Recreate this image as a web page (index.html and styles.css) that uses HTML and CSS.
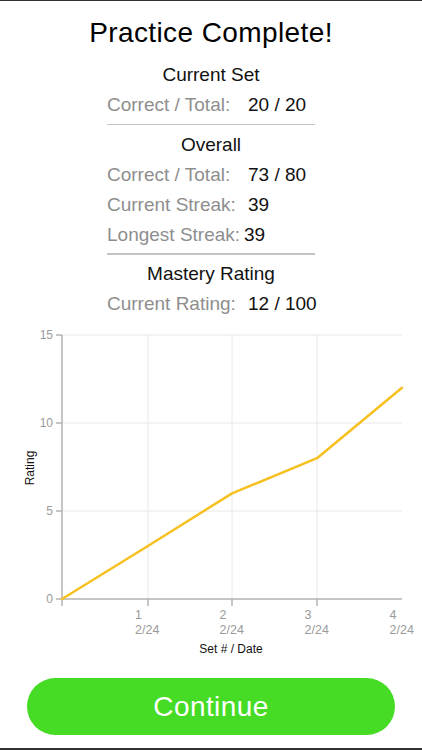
FILE: index.html
```html
<!DOCTYPE html>
<html>
<head>
<meta charset="utf-8">
<link rel="stylesheet" href="styles.css">
</head>
<body>
<div class="page">
  <h1 class="title">Practice Complete!</h1>
  <div class="stats">
    <div class="heading">Current Set</div>
    <div class="row"><span class="label">Correct / Total:</span><span class="value">20 / 20</span></div>
    <div class="divider"></div>
    <div class="heading">Overall</div>
    <div class="row"><span class="label">Correct / Total:</span><span class="value">73 / 80</span></div>
    <div class="row"><span class="label">Current Streak:</span><span class="value">39</span></div>
    <div class="row row-tight"><span class="label">Longest Streak:</span><span class="value">39</span></div>
    <div class="divider"></div>
    <div class="heading">Mastery Rating</div>
    <div class="row"><span class="label">Current Rating:</span><span class="value">12 / 100</span></div>
  </div>
  <svg class="chart" width="422" height="344" viewBox="0 319 422 344">
    <g class="grid">
      <line x1="62" y1="335" x2="402" y2="335"/>
      <line x1="62" y1="423" x2="402" y2="423"/>
      <line x1="62" y1="511" x2="402" y2="511"/>
      <line x1="148" y1="335" x2="148" y2="599"/>
      <line x1="232" y1="335" x2="232" y2="599"/>
      <line x1="317" y1="335" x2="317" y2="599"/>
    </g>
    <g class="axis">
      <line x1="62" y1="335" x2="62" y2="599.75"/>
      <line x1="61.25" y1="599" x2="402" y2="599"/>
      <line x1="56" y1="335" x2="62" y2="335"/>
      <line x1="56" y1="423" x2="62" y2="423"/>
      <line x1="56" y1="511" x2="62" y2="511"/>
      <line x1="56" y1="599" x2="62" y2="599"/>
      <line x1="62" y1="599" x2="62" y2="606"/>
      <line x1="148" y1="599" x2="148" y2="606"/>
      <line x1="232" y1="599" x2="232" y2="606"/>
      <line x1="317" y1="599" x2="317" y2="606"/>
    </g>
    <g class="ticks-y">
      <text x="53" y="339">15</text>
      <text x="53" y="427">10</text>
      <text x="53" y="515">5</text>
      <text x="53" y="603">0</text>
    </g>
    <g class="ticks-x">
      <text x="135" y="619">1</text><text x="135" y="634">2/24</text>
      <text x="219.5" y="619">2</text><text x="219.5" y="634">2/24</text>
      <text x="304.5" y="619">3</text><text x="304.5" y="634">2/24</text>
      <text x="389.5" y="619">4</text><text x="389.5" y="634">2/24</text>
    </g>
    <text class="axis-title" x="231" y="653">Set # / Date</text>
    <text class="axis-title" x="-468" y="34" transform="rotate(-90)">Rating</text>
    <polyline class="series" points="62,599 147.5,546.2 232,493.4 317,458.2 402,387.8"/>
  </svg>
  <button class="continue">Continue</button>
</div>
</body>
</html>
```
FILE: styles.css
```css
html, body {
  margin: 0;
  padding: 0;
  background: #ffffff;
}
body {
  font-family: "Liberation Sans", Arial, sans-serif;
}
.page {
  width: 422px;
  height: 750px;
  box-sizing: border-box;
  border-top: 1px solid #333333;
  border-bottom: 2px solid #333333;
  display: flex;
  flex-direction: column;
  overflow: hidden;
}
.title {
  margin: 14px 0 0 0;
  height: 36px;
  line-height: 36px;
  font-size: 28px;
  font-weight: normal;
  letter-spacing: 0.4px;
  text-align: center;
  color: #000000;
}
.stats {
  width: 208px;
  margin: 9px auto 0 auto;
  font-size: 19px;
}
.heading {
  height: 30px;
  line-height: 30px;
  text-align: center;
  color: #111111;
}
.row {
  display: flex;
  height: 30px;
  line-height: 30px;
}
.label {
  width: 141px;
  flex: none;
  color: #8e8e8e;
  white-space: nowrap;
}
.row-tight .label {
  width: 137px;
}
.value {
  color: #111111;
  white-space: nowrap;
}
.divider {
  height: 1.5px;
  background: #c4c4c4;
  margin: 3.5px 0 4.5px 0;
}
.chart {
  display: block;
  flex: none;
}
.grid line {
  stroke: #e8e8e8;
  stroke-width: 1;
}
.axis line {
  stroke: #b3b3b3;
  stroke-width: 1.5;
}
.ticks-y text {
  font-family: "Liberation Sans", Arial, sans-serif;
  font-size: 12px;
  fill: #9a9a9a;
  text-anchor: end;
}
.ticks-x text {
  font-family: "Liberation Sans", Arial, sans-serif;
  font-size: 12.5px;
  fill: #9a9a9a;
}
.axis-title {
  font-family: "Liberation Sans", Arial, sans-serif;
  font-size: 12px;
  fill: #111111;
  text-anchor: middle;
}
.series {
  fill: none;
  stroke: #f6c120;
  stroke-width: 2.5;
  stroke-linejoin: round;
  stroke-linecap: round;
}
.continue {
  display: block;
  flex: none;
  width: 368px;
  height: 57px;
  margin: 15px 0 0 27px;
  padding: 0;
  border: none;
  border-radius: 28.5px;
  background: #46dc25;
  color: #ffffff;
  font-family: "Liberation Sans", Arial, sans-serif;
  font-size: 28px;
  letter-spacing: 0.4px;
  line-height: 57px;
  text-align: center;
}
```
